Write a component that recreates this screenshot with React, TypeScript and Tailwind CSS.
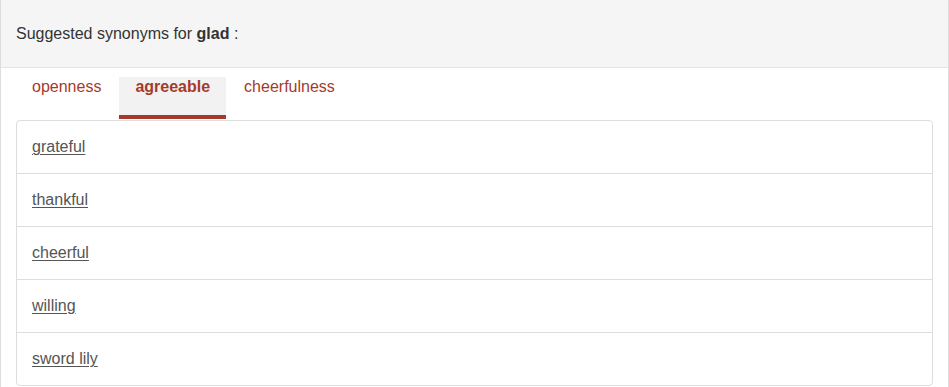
import React, { useState } from "react";

const tabs = ["openness", "agreeable", "cheerfulness"];

const synonyms: Record<string, string[]> = {
  openness: ["frank", "candid", "sincere", "honest", "straightforward"],
  agreeable: ["grateful", "thankful", "cheerful", "willing", "sword lily"],
  cheerfulness: ["happy", "joyful", "merry", "pleased", "delighted"],
};

export default function App() {
  const [active, setActive] = useState<string>("agreeable");

  return (
    <div className="w-[949px] h-[387px] overflow-hidden bg-white font-['Liberation_Sans',Arial,sans-serif] text-[16px]">
      <div className="border-x border-b border-[#dddddd] h-[420px]">
        {/* heading */}
        <div className="h-[68px] bg-[#f5f5f5] border-b border-[#e3e3e3] pl-[15px] flex items-center text-[#333333]">
          <span className="leading-[22px] pt-[1px]">
            Suggested synonyms for <b>glad</b> :
          </span>
        </div>

        <div className="px-[15px]">
          {/* tabs */}
          <div className="flex pt-[9px]">
            {tabs.map((tab) => (
              <button
                key={tab}
                onClick={() => setActive(tab)}
                className={`px-[16px] pt-[1px] pb-[19px] leading-[18px] border-b-4 mr-[2px] text-[#a63a2a] ${
                  active === tab
                    ? "bg-[#f2f2f2] border-[#a5392a] font-bold"
                    : "border-transparent"
                }`}
              >
                {tab}
              </button>
            ))}
          </div>

          {/* list */}
          <ul className="mt-[1px] border border-[#dddddd] rounded-[4px]">
            {synonyms[active].map((word, i) => (
              <li
                key={word}
                className={`h-[52px] px-[15px] flex items-center ${
                  i > 0 ? "border-t border-[#dddddd] h-[53px]" : ""
                }`}
              >
                <a
                  href="#"
                  className="leading-[22px] text-[#555555] underline underline-offset-[2px] decoration-[1px]"
                >
                  {word}
                </a>
              </li>
            ))}
          </ul>
        </div>
      </div>
    </div>
  );
}
